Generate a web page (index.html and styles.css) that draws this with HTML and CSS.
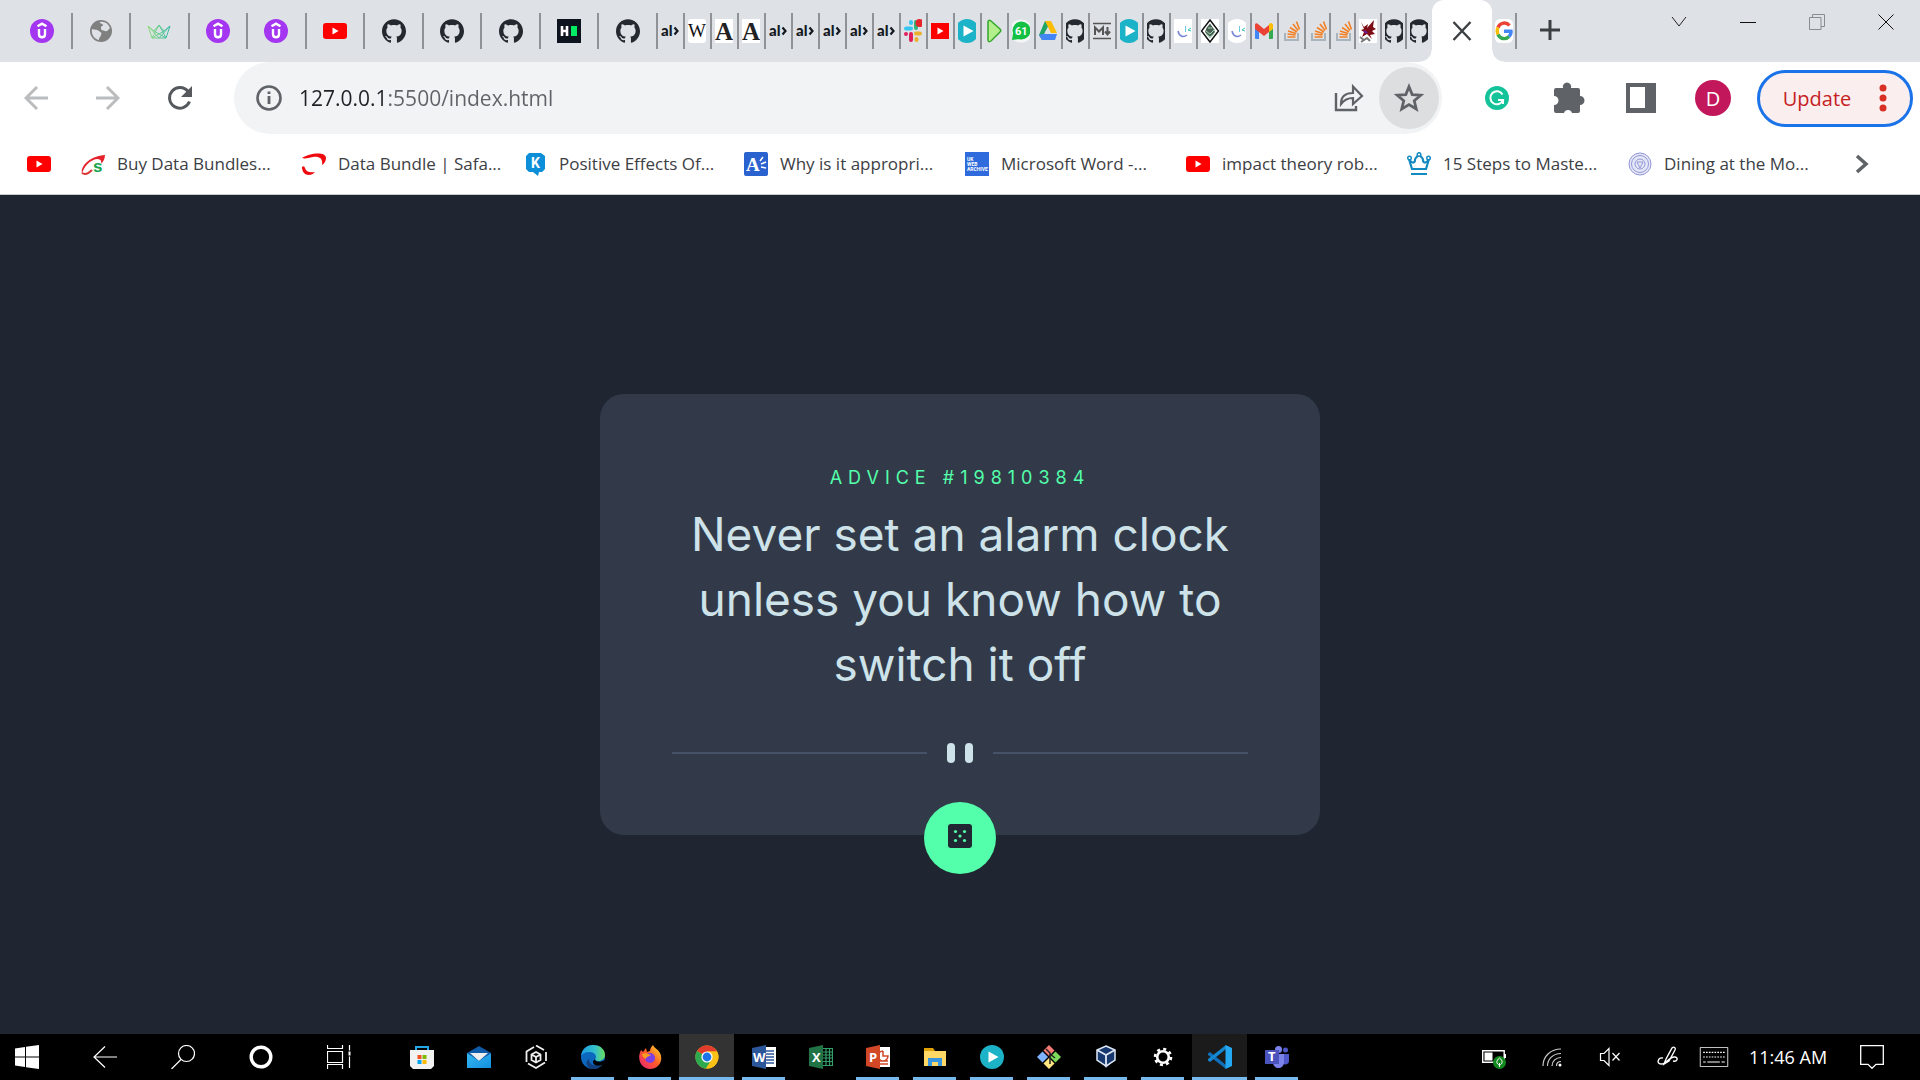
FILE: index.html
```html
<!DOCTYPE html>
<html lang="en">
<head>
<meta charset="utf-8">
<meta name="viewport" content="width=device-width, initial-scale=1">
<title>Advice Generator</title>
<link rel="stylesheet" href="styles.css">
</head>
<body>
<svg class="sprite" aria-hidden="true">
  <defs>
    <linearGradient id="edge-a" x1="0" y1="0" x2="1" y2="0"><stop offset="0" stop-color="#1b9de2"/><stop offset=".6" stop-color="#35c1c9"/><stop offset="1" stop-color="#6bdd5a"/></linearGradient>
    <linearGradient id="fox" x1="0" y1="1" x2="1" y2="0"><stop offset="0" stop-color="#e5207a"/><stop offset=".5" stop-color="#ff5a2a"/><stop offset="1" stop-color="#ffe226"/></linearGradient>
    <linearGradient id="mail-a" x1="0" y1="0" x2="1" y2="1"><stop offset="0" stop-color="#35b8f1"/><stop offset="1" stop-color="#1490df"/></linearGradient>
    <linearGradient id="crown-a" x1="0" y1="0" x2="1" y2="0"><stop offset="0" stop-color="#8fdc7a"/><stop offset="1" stop-color="#35b9a5"/></linearGradient>
  </defs>
  <symbol id="udemy" viewBox="0 0 24 24"><circle cx="12" cy="12" r="12" fill="#a435f0"/><path d="M7.500 7.300L12 4.600l4.500 2.700M9 10v5.200c0 4 6 4 6 0V10" fill="none" stroke="#fff" stroke-width="2.400"/></symbol>
  <symbol id="globe" viewBox="0 0 24 24"><circle cx="12" cy="12" r="11" fill="#808080"/><path d="M3 10c2 1 5 0 7 2s3 1 2 4-2 2-2 5C5 20 2 15 3 10zM11 3c4-1 8 1 10 6-2 2-3 4-5 3s-4 0-4-3 2-1 2-3-4-1-3-3z" fill="#dee1e6"/></symbol>
  <symbol id="crown" viewBox="0 0 24 24"><path d="M1 7l6 5 5-6 5 6 6-5-4 12H5zM5 19l7-13 7 13M1 7l11 12L23 7M7 12l12 7M17 12L5 19" fill="none" stroke="url(#crown-a)"/></symbol>
  <symbol id="youtube" viewBox="0 0 24 24" preserveAspectRatio="xMidYMid slice"><rect y="4" width="24" height="16" rx="3" fill="#f00"/><path d="M9.500 8.500v7l6-3.500z" fill="#fff"/></symbol>
  <symbol id="github" viewBox="0 0 24 24" preserveAspectRatio="xMidYMid slice"><path fill="#24292f" d="M12 .297c-6.630 0-12 5.373-12 12 0 5.303 3.438 9.800 8.205 11.385.6.113.82-.258.82-.577 0-.285-.01-1.040-.015-2.040-3.338.724-4.042-1.610-4.042-1.610C4.422 18.070 3.633 17.700 3.633 17.700c-1.087-.744.084-.729.084-.729 1.205.084 1.838 1.236 1.838 1.236 1.070 1.835 2.809 1.305 3.495.998.108-.776.417-1.305.76-1.605-2.665-.3-5.466-1.332-5.466-5.930 0-1.310.465-2.380 1.235-3.220-.135-.303-.54-1.523.105-3.176 0 0 1.005-.322 3.300 1.230.96-.267 1.980-.399 3-.405 1.020.006 2.040.138 3 .405 2.280-1.552 3.285-1.230 3.285-1.230.645 1.653.24 2.873.12 3.176.765.84 1.230 1.910 1.230 3.220 0 4.610-2.805 5.625-5.475 5.920.42.36.81 1.096.81 2.220 0 1.606-.015 2.896-.015 3.286 0 .315.21.69.825.57C20.565 22.092 24 17.592 24 12.297c0-6.627-5.373-12-12-12"/></symbol>
  <symbol id="slack" viewBox="0 0 18 24"><g stroke-width="4" stroke-linecap="round"><path d="M7 9.500H2M7 3v1" stroke="#36c5f0"/><path d="M12 9V3" stroke="#2eb67d"/><path d="M7 15v6M2 15v0" stroke="#e01e5a"/><path d="M12 14.500h4M12.500 20v1" stroke="#ecb22e"/></g><circle cx="15.500" cy="4" r="4" fill="#e5252a"/></symbol>
  <symbol id="play" viewBox="0 0 24 24" preserveAspectRatio="xMidYMid slice"><circle cx="12" cy="12" r="12" fill="#1cb3c8"/><path d="M8.500 6.500v11l10-5.500z" fill="#fff"/></symbol>
  <symbol id="greenplay" viewBox="0 0 18 24"><path d="M3 3c0-2 1.500-2 3-1l9 8c1 1 1 2 0 3l-9 9c-1.500 1-3 1-3-1z" fill="#b4ef8d" stroke="#34a62b" stroke-width="1.500"/></symbol>
  <symbol id="drive" viewBox="0 0 18 24"><path d="M6 2h6l-6 11-3 8-3-5z" fill="#1fa463"/><path d="M6 2h6l6 12h-6z" fill="#fbbc04"/><path d="M4 15h14l-2 6H3l-3-5z" fill="#4285f4"/></symbol>
  <symbol id="markdown" viewBox="0 0 18 24"><path d="M0 4.500h18M0 19.500h18" stroke="#555" stroke-width="1.500"/><path d="M2 16V8.500l4 4 4-4V16M14.500 8v7M12 12.500l2.500 3 2.500-3" fill="none" stroke="#555" stroke-width="2"/></symbol>
  <symbol id="smile" viewBox="0 0 18 24"><path d="M4 12c1 5 5 7 9 4" fill="none" stroke="#7887d6" stroke-width="1.500"/><path d="M11.500 7v6" stroke="#6cc8de"/><path d="M17 9l-3 2 3 1" fill="none" stroke="#3fc3b6"/></symbol>
  <symbol id="hood" viewBox="0 0 18 24"><path d="M0 0h18v24H0z" fill="#fff"/><path d="M9 1l8.500 11L9 23 .5 12z" fill="#fff" stroke="#111" stroke-width="1.500"/><path d="M9 4.500l3.500 5L14 13l-5 6-5-6 1.500-4z" fill="#4a5f53"/><path d="M5 12l4 3 5-5M5 15l4 3 4-3M7 9h4" stroke="#9fd8b4" fill="none"/></symbol>
  <symbol id="gmail" viewBox="0 0 18 24"><path d="M0 6h4v14H1c-1 0-1-1-1-1z" fill="#4285f4"/><path d="M14 6h4v13s0 1-1 1h-3z" fill="#34a853"/><path d="M14 5l2-1c1 0 2 1 2 2v4l-4 3z" fill="#fbbc04"/><path d="M0 6c0-2 2-2 3-1l6 5 5-4v7l-5 4-9-7z" fill="#ea4335"/></symbol>
  <symbol id="so" viewBox="0 0 18 24"><path d="M3 14v7h13v-7" fill="none" stroke="#aab4bc" stroke-width="2"/><path d="M5.500 18h8M5.500 15l8 1M6 12l8 2.500M8 8.500l7 4.500M11 5l5 6.500M14.500 2.500l3 8" stroke="#f48024" stroke-width="1.600"/></symbol>
  <symbol id="dragon" viewBox="0 0 18 24"><path d="M0 0h18v24H0z" fill="#fff"/><path d="M2 3l3 5 4-3-1 4 7-8-1 7 3 2-4 2 3 3-5 1 2 4-5-5-5 3 2-5-3-2 3-1z" fill="#7d0d16"/><path d="M1 18l4 3 3-2 3 3M2 23l3-2" stroke="#777" fill="none" stroke-width="2"/><path d="M5 12l3 2" stroke="#6b1fa5" stroke-width="2"/></symbol>
  <symbol id="google" viewBox="0 0 18 24"><rect width="18" height="24" rx="5" fill="#fff"/><g fill="none" stroke-width="3.400"><path d="M14.500 6.500A7 7.800 0 0 0 3 8.500" stroke="#ea4335"/><path d="M3 8.500a7 7.800 0 0 0 0 7" stroke="#fbbc05"/><path d="M3 15.500A7 7.800 0 0 0 14 17.500" stroke="#34a853"/><path d="M14 17.500c1.500-1.500 2.300-3.500 2-5.300H9" stroke="#4285f4"/></g></symbol>
  <symbol id="bluecrown" viewBox="0 0 24 24"><path d="M5 17h14l3-10c-2 4-6 5-6 1 0-3-2-2-4-6-2 4-4 3-4 6 0 4-4 3-6-1zM4 22h16" fill="none" stroke="#128ac0" stroke-width="2.200"/><g fill="#fff" stroke="#128ac0" stroke-width="1.400"><circle cx="12" cy="2.500" r="1.800"/><circle cx="2.500" cy="6" r="1.800"/><circle cx="21.500" cy="6" r="1.800"/></g></symbol>
  <symbol id="seal" viewBox="0 0 24 24"><g fill="#e7e8f7" stroke="#9195d5"><circle cx="12" cy="12" r="11"/><circle cx="12" cy="12" r="8.500"/><circle cx="12" cy="12" r="5"/><path d="M9 10h6l-3 6z"/></g></symbol>
</svg>

<header class="browser">
  <nav class="tabstrip" aria-label="Open tabs">
    <div class="tabs tabs-wide">
      <button class="tab"><svg class="ico"><use href="#udemy"/></svg></button>
      <button class="tab"><svg class="ico"><use href="#globe"/></svg></button>
      <button class="tab"><svg class="ico"><use href="#crown"/></svg></button>
      <button class="tab"><svg class="ico"><use href="#udemy"/></svg></button>
      <button class="tab"><svg class="ico"><use href="#udemy"/></svg></button>
      <button class="tab"><svg class="ico"><use href="#youtube"/></svg></button>
      <button class="tab"><svg class="ico"><use href="#github"/></svg></button>
      <button class="tab"><svg class="ico"><use href="#github"/></svg></button>
      <button class="tab"><svg class="ico"><use href="#github"/></svg></button>
      <button class="tab"><svg class="ico" viewBox="0 0 24 24"><path d="M0 0h24v24H0z" fill="#0e141e"/><path d="M5 7v10M10 7v10M5 12h5" stroke="#fff" stroke-width="2.600"/><path d="M14 7h6v10h-6z" fill="#00ea64"/></svg></button>
      <button class="tab"><svg class="ico"><use href="#github"/></svg></button>
    </div>
    <div class="tabs tabs-narrow">
      <button class="tab"><svg class="ico" viewBox="0 0 18 24"><text x="0" y="17" class="g-alx">al</text><path d="M13.500 8.500l3 3.500-3 3.500" fill="none" stroke="#14191f" stroke-width="2.200"/></svg></button>
      <button class="tab"><svg class="ico" viewBox="0 0 18 24"><rect width="18" height="24" rx="3" fill="#fff"/><text x="0" y="18" class="g-wiki">W</text></svg></button>
      <button class="tab"><svg class="ico" viewBox="0 0 18 24"><path d="M0 0h18v24H0z" fill="#fff"/><text x="0" y="21" class="g-serif">A</text></svg></button>
      <button class="tab"><svg class="ico" viewBox="0 0 18 24"><path d="M0 0h18v24H0z" fill="#fff"/><text x="0" y="21" class="g-serif">A</text></svg></button>
      <button class="tab"><svg class="ico" viewBox="0 0 18 24"><text x="0" y="17" class="g-alx">al</text><path d="M13.500 8.500l3 3.500-3 3.500" fill="none" stroke="#14191f" stroke-width="2.200"/></svg></button>
      <button class="tab"><svg class="ico" viewBox="0 0 18 24"><text x="0" y="17" class="g-alx">al</text><path d="M13.500 8.500l3 3.500-3 3.500" fill="none" stroke="#14191f" stroke-width="2.200"/></svg></button>
      <button class="tab"><svg class="ico" viewBox="0 0 18 24"><text x="0" y="17" class="g-alx">al</text><path d="M13.500 8.500l3 3.500-3 3.500" fill="none" stroke="#14191f" stroke-width="2.200"/></svg></button>
      <button class="tab"><svg class="ico" viewBox="0 0 18 24"><text x="0" y="17" class="g-alx">al</text><path d="M13.500 8.500l3 3.500-3 3.500" fill="none" stroke="#14191f" stroke-width="2.200"/></svg></button>
      <button class="tab"><svg class="ico" viewBox="0 0 18 24"><text x="0" y="17" class="g-alx">al</text><path d="M13.500 8.500l3 3.500-3 3.500" fill="none" stroke="#14191f" stroke-width="2.200"/></svg></button>
      <button class="tab"><svg class="ico"><use href="#slack"/></svg></button>
      <button class="tab"><svg class="ico"><use href="#youtube"/></svg></button>
      <button class="tab"><svg class="ico"><use href="#play"/></svg></button>
      <button class="tab"><svg class="ico"><use href="#greenplay"/></svg></button>
      <button class="tab"><svg class="ico" viewBox="0 0 18 24"><circle cx="9" cy="12" r="11.500" fill="#f3f6f4"/><circle cx="9.500" cy="11.500" r="9" fill="#12c143"/><path d="M0 21l1-7 6 6z" fill="#12c143"/><text x="3" y="16" class="g-badge">61</text></svg></button>
      <button class="tab"><svg class="ico"><use href="#drive"/></svg></button>
      <button class="tab"><svg class="ico"><use href="#github"/></svg></button>
      <button class="tab"><svg class="ico"><use href="#markdown"/></svg></button>
      <button class="tab"><svg class="ico"><use href="#play"/></svg></button>
      <button class="tab"><svg class="ico"><use href="#github"/></svg></button>
      <button class="tab"><svg class="ico" viewBox="0 0 18 24"><path d="M0 0h18v24H0z" fill="#fff"/><use href="#smile" width="18" height="24"/></svg></button>
      <button class="tab"><svg class="ico"><use href="#hood"/></svg></button>
      <button class="tab"><svg class="ico" viewBox="0 0 18 24"><circle cx="9" cy="12" r="12" fill="#fff"/><use href="#smile" width="18" height="24"/></svg></button>
      <button class="tab"><svg class="ico"><use href="#gmail"/></svg></button>
      <button class="tab"><svg class="ico"><use href="#so"/></svg></button>
    </div>
    <div class="tabs tabs-tight">
      <button class="tab"><svg class="ico"><use href="#so"/></svg></button>
      <button class="tab"><svg class="ico"><use href="#so"/></svg></button>
      <button class="tab"><svg class="ico"><use href="#dragon"/></svg></button>
      <button class="tab"><svg class="ico"><use href="#github"/></svg></button>
      <button class="tab"><svg class="ico"><use href="#github"/></svg></button>
    </div>
    <button class="tab-active" aria-label="Close tab"><svg class="ico" viewBox="0 0 24 24"><path d="M3.500 3l17 18M20.500 3l-17 18" stroke="#3c4043" stroke-width="2.400"/></svg></button>
    <button class="tab tab-last"><svg class="ico"><use href="#google"/></svg></button>
    <button class="newtab" aria-label="New tab"><svg class="ico" viewBox="0 0 24 24"><path d="M12 1v20M2 11h20" stroke="#3c4043" stroke-width="3"/></svg></button>
    <div class="winctl">
      <button aria-label="Search tabs"><svg viewBox="0 0 16 16"><path d="M1 3l7 9 7-9" fill="none" stroke="#222"/></svg></button>
      <button aria-label="Minimize"><svg viewBox="0 0 16 16"><path d="M0 8.500h16" stroke="#111"/></svg></button>
      <button aria-label="Restore"><svg viewBox="0 0 16 16"><path d="M.5 3.500h11.500v12H.5zM3.500 3V.5h12V12.500H12" fill="none" stroke="#888c90"/></svg></button>
      <button aria-label="Close"><svg viewBox="0 0 16 16"><path d="M.5.5l15 15M15.500.5l-15 15" stroke="#111"/></svg></button>
    </div>
  </nav>

  <div class="toolbar">
    <div class="navbtns">
      <button aria-label="Back"><svg class="ico" viewBox="0 0 24 24"><path d="M24 12H2M13 1L2 12l11 11" fill="none" stroke="#babcbe" stroke-width="3"/></svg></button>
      <button aria-label="Forward"><svg class="ico" viewBox="0 0 24 24"><path d="M0 12h22M11 1l11 11-11 11" fill="none" stroke="#babcbe" stroke-width="3"/></svg></button>
      <button aria-label="Reload"><svg class="ico" viewBox="0 0 24 24"><path d="M21.500 15.500A10.300 10.300 0 1 1 20 5.500" fill="none" stroke="#55585c" stroke-width="3"/><path d="M24 0v11H13z" fill="#55585c"/></svg></button>
    </div>
    <div class="omnibox">
      <svg class="info" viewBox="0 0 26 26"><circle cx="13" cy="13" r="11.500" fill="none" stroke="#5f6368" stroke-width="2.600"/><path d="M13 11v8M13 6.500V9" stroke="#5f6368" stroke-width="2.800"/></svg>
      <input class="url" type="text" aria-label="Address" value="127.0.0.1:5500/index.html">
      <button class="share" aria-label="Share"><svg viewBox="0 0 30 30"><path d="M2 10v17h20v-4" fill="none" stroke="#5f6368" stroke-width="2.400"/><path d="M7 21c0-8 5-11 12-11V3.500L28 13l-9 8v-6c-6 0-9 2-12 6z" fill="none" stroke="#5f6368" stroke-width="2.200"/></svg></button>
      <button class="star" aria-label="Bookmark this page"><svg viewBox="0 0 28 28"><path d="M14 3.500l3 7.300 7.900.6-6 5.200 1.900 7.700L14 20.200l-6.800 4.100 1.900-7.700-6-5.200 7.900-.6z" fill="none" stroke="#5f6368" stroke-width="2.600"/></svg></button>
    </div>
    <div class="exts">
      <button aria-label="Grammarly"><svg viewBox="0 0 24 24" class="ico"><circle cx="12" cy="12" r="12" fill="#15c39a"/><path d="M17.500 8.500A6.500 6.500 0 1 0 18 14h-5M18 18v-4" fill="none" stroke="#fff" stroke-width="2"/></svg></button>
      <button aria-label="Extensions"><svg class="ext-ico" viewBox="0 0 32 32"><path d="M3 6h7a4.200 4.200 0 1 1 8 0h7a2 2 0 0 1 2 2v6a4.500 4.500 0 1 1 0 9v6a2 2 0 0 1-2 2h-6a4.200 4.200 0 0 0-8 0H3a2 2 0 0 1-2-2v-6a4.500 4.500 0 0 0 0-9V8a2 2 0 0 1 2-2z" fill="#5f6368"/></svg></button>
      <button aria-label="Side panel"><svg class="ext-ico" viewBox="0 0 32 32"><path d="M1 1h30v30H1z" fill="#5f6368"/><path d="M5 5h15v21H5z" fill="#fff"/></svg></button>
      <button class="avatar" aria-label="Profile">D</button>
    </div>
    <button class="update">Update<svg viewBox="0 0 8 28"><g fill="#d93025"><circle cx="4" cy="4" r="3.500"/><circle cx="4" cy="14" r="3.500"/><circle cx="4" cy="24" r="3.500"/></g></svg></button>
  </div>

  <nav class="bookmarks" aria-label="Bookmarks">
    <a href="#" class="bm-first" aria-label="YouTube"><svg class="ico"><use href="#youtube"/></svg></a>
    <a href="#"><svg class="ico" viewBox="0 0 24 24"><path d="M1 22C-1 14 9 4 24 3c0 4-2 7-4 9 1-4-1-5-4-5C9 8 3 14 1 22z" fill="#e5222b"/><path d="M1 21c3 2 7 0 10-3" stroke="#d33" stroke-width="2" fill="none"/><text x="12" y="20" class="g-saf">s</text></svg>Buy Data Bundles...</a>
    <a href="#"><svg class="ico" viewBox="0 0 24 24"><path d="M0 6C7 1 24-1 24 6c0 3-2 6-4 7 1-6-2-9-9-8-5 1-8 2-11 1zM0 15c2-1 2-1 3 1 1 4 5 5 10 4-4 5-13 4-13-5z" fill="#f0090d"/></svg>Data Bundle | Safa...</a>
    <a href="#"><svg class="ico" viewBox="0 0 24 24"><path d="M6 1h12l4 3v13l-3 3h-3l-1 4-5-4H6l-3-3V4z" fill="#0d8ed8"/><text x="8" y="16" class="g-k">K</text></svg>Positive Effects Of...</a>
    <a href="#"><svg class="ico" viewBox="0 0 24 24"><rect width="24" height="24" rx="2" fill="#2a62d0"/><text x="2" y="19" class="g-as">A</text><path d="M16 9l3-4M17 12l5-2M17 15l5 1" stroke="#fff" stroke-width="1.500"/></svg>Why is it appropri...</a>
    <a href="#"><svg class="ico" viewBox="0 0 24 24"><path d="M0 0h24v24H0z" fill="#2f6bdc"/><text x="2" y="9" class="g-uk">UK</text><text x="2" y="14" class="g-uk">WEB</text><text x="2" y="19" class="g-uk">ARCHIVE</text></svg>Microsoft Word -...</a>
    <a href="#"><svg class="ico"><use href="#youtube"/></svg>impact theory rob...</a>
    <a href="#"><svg class="ico"><use href="#bluecrown"/></svg>15 Steps to Maste...</a>
    <a href="#"><svg class="ico"><use href="#seal"/></svg>Dining at the Mo...</a>
    <button class="more" aria-label="More bookmarks"><svg viewBox="0 0 14 20"><path d="M2 2l9 8-9 8" fill="none" stroke="#5f6368" stroke-width="3.500"/></svg></button>
  </nav>
</header>

<main class="page">
  <article class="card">
    <h1 class="advice-id">ADVICE #19810384</h1>
    <p class="advice">Never set an alarm clock unless you know how to switch it off</p>
    <div class="divider"><span class="rule"></span><span class="bar"></span><span class="bar"></span><span class="rule"></span></div>
    <button class="dice" aria-label="New advice"><svg class="ico" viewBox="0 0 24 24"><rect width="24" height="24" rx="3" fill="#202733"/><g fill="#53ffaa"><circle cx="7.500" cy="7.500" r="1.600"/><circle cx="16.500" cy="7.500" r="1.600"/><circle cx="12" cy="12" r="1.600"/><circle cx="7.500" cy="16.500" r="1.600"/><circle cx="16.500" cy="16.500" r="1.600"/></g></svg></button>
  </article>
</main>

<footer class="taskbar">
  <div class="system">
    <button aria-label="Start"><svg class="ico" viewBox="0 0 24 24"><path d="M0 3.500l10-1.500v9.500H0zM11 1.800L24 0v11.500H11zM0 12.500h10V22L0 20.500zM11 12.500h13V24l-13-1.800z" fill="#fff"/></svg></button>
    <button aria-label="Back"><svg class="ico" viewBox="0 0 24 24"><path d="M24 12H1M12 1.500L1 12l11 10.500" fill="none" stroke="#fff" stroke-width="1.200"/></svg></button>
    <button aria-label="Search"><svg class="ico" viewBox="0 0 24 24"><circle cx="15.500" cy="8.500" r="8" fill="none" stroke="#fff" stroke-width="1.200"/><path d="M10 14.500L.5 24" stroke="#fff" stroke-width="1.200"/></svg></button>
    <button aria-label="Cortana"><svg class="ico" viewBox="0 0 24 24"><circle cx="12" cy="12" r="9.800" fill="none" stroke="#fff" stroke-width="3.400"/></svg></button>
    <button aria-label="Task view"><svg class="ico" viewBox="0 0 24 24"><path d="M.5 0v3.500h15V0M.5 24v-4.500h15V24M.5 6.500h15v11H.5zM22.500 0v23" fill="none" stroke="#fff" stroke-width="1.200"/><path d="M21 6h3v5h-3z" fill="#fff" stroke="#000"/></svg></button>
  </div>
  <div class="apps">
    <button aria-label="Store"><svg class="ico" viewBox="0 0 24 24"><path d="M6 7V2h12v5" fill="none" stroke="#26a8e8" stroke-width="2"/><path d="M0 5h24v16l-3 3H3l-3-3z" fill="#f2f2f2"/><path d="M7.500 10h4v4h-4z" fill="#f25022"/><path d="M12.500 10h4v4h-4z" fill="#7fba00"/><path d="M7.500 15h4v4h-4z" fill="#00a4ef"/><path d="M12.500 15h4v4h-4z" fill="#ffb900"/></svg></button>
    <button aria-label="Mail"><svg class="ico" viewBox="0 0 24 24"><path d="M0 8l12-7 12 7-12 9z" fill="#0f5ba8"/><path d="M3 8h18l-9 8z" fill="#eee"/><path d="M0 8l12 8 12-8v15H0z" fill="url(#mail-a)"/></svg></button>
    <button aria-label="Hub"><svg class="ico" viewBox="0 0 24 24"><path d="M4 18.500l8 4.500 9-5.500M20 5l-8-4.500M2.500 17V6.500L10 2M22 7v9M7.500 9.500L12 7l4.500 2.500v5.500L12 17.500 7.500 15zM7.500 9.500L12 12l4.500-2.500M12 12v5.500" fill="none" stroke="#eee" stroke-width="1.800"/></svg></button>
    <button class="running" aria-label="Edge"><svg class="ico" viewBox="0 0 24 24"><circle cx="12" cy="12" r="12" fill="#0c68bf"/><path d="M0 11C1 3 7 0 12 0c8 0 12 5 12 10 0 4-4 6-7 6-2 0-3-1-3-2 1-1 1-1 1-2 0-4-4-5-7-5-4 0-7 2-8 4z" fill="url(#edge-a)"/><path d="M8 14c0 6 6 8 13 6-3 4-8 4-10 4-5-1-8-7-3-10z" fill="#123f7d"/><path d="M14 14c0 3 5 4 10 1v3l-3 2c-5 2-9 0-9-3 0-1 1-2 2-3z" fill="#000"/></svg></button>
    <button class="running" aria-label="Firefox"><svg class="ico" viewBox="0 0 24 24"><path d="M3 5l2 2 3-4 1 4 3-1C12 3 14 1 15 0c1 3 5 4 7 8 4 8-2 16-10 16S-2 15 3 5z" fill="url(#fox)"/><circle cx="12" cy="13" r="5" fill="#7b3fe4"/><path d="M4 9c4-2 6 0 9 1-2 2-5 1-5 4-2-1-4-3-4-5z" fill="#ff9d1e"/></svg></button>
    <button class="running focus" aria-label="Chrome"><svg class="ico" viewBox="0 0 24 24"><circle cx="12" cy="12" r="11.500" fill="#fbc116"/><path d="M12 12L2 6A11.500 11.500 0 0 1 22 6.500H12z" fill="#e33b2e"/><path d="M2 6a11.500 11.500 0 0 0 9 17.500L17 14l-5-2z" fill="#2da94f"/><path d="M12 6.500h10a11.500 11.500 0 0 1-11 17L17 14z" fill="#fbc116"/><circle cx="12" cy="12" r="5.600" fill="#fff"/><circle cx="12" cy="12" r="4.400" fill="#1a73e8"/></svg></button>
    <button class="running" aria-label="Word"><svg class="ico" viewBox="0 0 24 24"><path d="M12 2h12v20H12z" fill="#fff"/><path d="M14 6h8M14 9h8M14 12h8M14 15h8M14 18h8" stroke="#2b579a" stroke-width="1.400"/><path d="M0 3l14-3v24L0 21z" fill="#2b579a"/><text x="1" y="17" class="g-office">W</text></svg></button>
    <button aria-label="Excel"><svg class="ico" viewBox="0 0 24 24"><path d="M13 3.500h10.500v17H13zM17 3v18M20.500 3v18M13 7h11M13 10h11M13 13h11M13 16.500h11" fill="none" stroke="#33a06a" stroke-width="1.200"/><path d="M0 3l14-3v24L0 21z" fill="#217346"/><text x="3" y="17" class="g-office">X</text></svg></button>
    <button class="running" aria-label="PowerPoint"><svg class="ico" viewBox="0 0 24 24"><path d="M12 2h12v20H12z" fill="#fff"/><path d="M17 6v5h5a5 5 0 1 1-5-5M14 16h8M14 19h8" stroke="#d24726" stroke-width="1.500" fill="none"/><path d="M0 3l14-3v24L0 21z" fill="#d24726"/><text x="3" y="17" class="g-office">P</text></svg></button>
    <button class="running" aria-label="File Explorer"><svg class="ico" viewBox="0 0 24 24"><path d="M1 3h9l2 3v4H1z" fill="#e0a106"/><path d="M1 6h22v15H1z" fill="#ffd866"/><path d="M5 21v-8h14v8h-4v-4H9v4z" fill="#3b96e0"/></svg></button>
    <button class="running" aria-label="Media player"><svg class="ico"><use href="#play"/></svg></button>
    <button class="running" aria-label="Git"><svg class="ico" viewBox="0 0 24 24"><path d="M12 0l5.500 5.500L12 11 6.500 5.500z" fill="#f57c74"/><path d="M5.500 6.500L11 12l-5.500 5.500L0 12z" fill="#80b3ff"/><path d="M18.500 6.500L24 12l-5.500 5.500L13 12z" fill="#7ddb5c"/><path d="M12 13l5.500 5.500L12 24l-5.500-5.500z" fill="#ffe680"/><path d="M9 4l4 4v11M13 9l5 4" fill="none" stroke="#222" stroke-width="1.500"/></svg></button>
    <button class="running" aria-label="VirtualBox"><svg class="ico" viewBox="0 0 24 24"><path d="M8 18l4 5 5-5z" fill="#7d86b0"/><path d="M12 1l9 4v10l-9 6-9-6V5z" fill="#17386e" stroke="#dfe9f5" stroke-width="1.500"/><path d="M3 5l9 5 9-5M12 10v11" fill="none" stroke="#dfe9f5" stroke-width="1.800"/></svg></button>
    <button class="running" aria-label="Settings"><svg class="ico" viewBox="0 0 24 24"><circle cx="12" cy="12" r="5.800" fill="none" stroke="#fff" stroke-width="2.600"/><circle cx="12" cy="12" r="8" fill="none" stroke="#fff" stroke-width="2.600" stroke-dasharray="3 3.280"/></svg></button>
    <button class="running focus-dim" aria-label="Visual Studio Code"><svg class="ico" viewBox="0 0 24 24"><path d="M0 8.500L2 7l16 13v4L0 10z" fill="#0f6fb8"/><path d="M0 15.500L2 17 18 4V0L0 14z" fill="#1487d0"/><path d="M17.500 0L24 3v18l-6.500 3z" fill="#25a8f2"/></svg></button>
    <button class="running" aria-label="Teams"><svg class="ico" viewBox="0 0 24 24"><circle cx="13.500" cy="4.500" r="3.500" fill="#7b83eb"/><circle cx="20.500" cy="5" r="2.500" fill="#5059c9"/><path d="M17 9h7v7c0 3-3 4-6 3z" fill="#5059c9"/><path d="M8 9h11v8c0 8-11 8-11 0z" fill="#7b83eb"/><path d="M0 5h14v14H0z" fill="#4b53bc"/><text x="3" y="16" class="g-office">T</text></svg></button>
  </div>
  <div class="tray">
    <button aria-label="Battery"><svg class="ico" viewBox="0 0 24 24"><path d="M.7 5.700h21.500v11.600H.7z" fill="none" stroke="#fff" stroke-width="1.400"/><path d="M2.500 7.500h8v8h-8zM22 9h2v4h-2z" fill="#fff"/><circle cx="17.500" cy="17.500" r="6.500" fill="#128a1f"/><path d="M17.500 22v-4M17.500 13c4 3 3 6 0 7-3-1-4-4 0-7z" fill="none" stroke="#fff"/></svg></button>
    <button aria-label="Network"><svg class="ico" viewBox="0 0 24 24"><path d="M3 21C3 11 11 4 21 4M7.500 21C7.500 14 13 8.500 21 8.500M12 21c0-5 4-8.500 9-8.500M16.500 21c0-3 2-4.500 4.500-4.500" fill="none" stroke="#ccc" stroke-width="1.200"/><circle cx="20" cy="20" r="1.500" fill="#fff"/></svg></button>
    <button aria-label="Volume"><svg class="ico" viewBox="0 0 24 24"><path d="M2.500 8.500H6l5-5v17l-5-5H2.500zM14.500 8l7 7.500M21.500 8l-7 7.500" fill="none" stroke="#fff" stroke-width="1.200"/></svg></button>
    <button aria-label="Pen"><svg class="ico" viewBox="0 0 24 24"><path d="M8 19l2-5 6-11c2-2 4 0 3 2l-6 11zM7 13c-5-1-7 6-2 6 5 1 8-8 14-7 4 1 2 5-2 4" fill="none" stroke="#fff" stroke-width="1.400"/></svg></button>
    <button class="kbd" aria-label="Touch keyboard"><svg viewBox="0 0 34 24"><path d="M.5.500h33v23H.5z" fill="none" stroke="#fff"/><path d="M4 6.500h26M4 12h26" stroke="#fff" stroke-width="1.400" stroke-dasharray="2 1.400"/><path d="M4 18h3M9 18h15M26 18h4" stroke="#fff" stroke-width="1.400"/></svg></button>
    <time class="clock">11:46 AM</time>
    <button class="notify" aria-label="Notifications"><svg class="ico" viewBox="0 0 24 24"><path d="M.7.700h22.600v18.600H16l-4 4-4-4H.7z" fill="none" stroke="#fff" stroke-width="1.300"/></svg></button>
  </div>
</footer>
</body>
</html>
```
FILE: styles.css
```css
* { box-sizing: border-box; }

body {
  margin: 0;
  min-height: 100vh;
  display: flex;
  flex-direction: column;
  font-family: "Open Sans", "Noto Sans", sans-serif;
  background: #1f2632;
}

button {
  border: 0;
  padding: 0;
  background: none;
  font: inherit;
  display: flex;
  align-items: center;
  justify-content: center;
}

svg { display: block; flex: none; }
.sprite { width: 0; height: 0; position: absolute; }
.ico { width: 24px; height: 24px; }

/* Lettering inside favicons and app icons */
.g-alx { font: 900 15px Lato, sans-serif; fill: #14191f; }
.g-wiki { font: 19px "Liberation Serif", serif; fill: #111; }
.g-serif { font: bold 25px "Liberation Serif", serif; fill: #222; }
.g-badge { font: bold 11px Roboto, sans-serif; fill: #fff; }
.g-saf { font: bold 17px "Liberation Sans", sans-serif; fill: #17a44b; }
.g-k { font: bold 14px Roboto, sans-serif; fill: #fff; }
.g-as { font: bold 19px "Liberation Serif", serif; fill: #fff; }
.g-uk { font: bold 5px Roboto, sans-serif; fill: #fff; }
.g-office { font: bold 13px "Open Sans", sans-serif; fill: #fff; }

/* Tab strip */
.browser { background: #fff; border-bottom: 1px solid #c9cbd0; }
.tabstrip { display: flex; height: 62px; background: #dee1e6; }
.tabs { display: flex; align-items: center; }
.tab {
  flex: 1 1 0;
  min-width: 0;
  height: 36px;
  border-right: 2px solid #8f9296;
  overflow: hidden;
}
.tabs-wide { flex: 0 0 658px; padding-left: 14px; }
.tabs-narrow { flex: 0 0 648px; }
.tabs-tight { flex: 0 0 126px; }
.tabs-narrow .tab { justify-content: flex-start; padding-left: 3px; }
.tabs-tight .tab { justify-content: flex-start; padding-left: 3px; }
.tabs-tight .tab:last-child { border-right-color: transparent; }
.tabs-narrow .ico, .tabs-tight .ico, .tab-last .ico { width: 18px; }
.tab-active {
  position: relative;
  flex: 0 0 60px;
  background: #fff;
  border-radius: 12px 12px 0 0;
}
.tab-active::before, .tab-active::after {
  content: "";
  position: absolute;
  bottom: 0;
  width: 12px;
  height: 12px;
}
.tab-active::before { right: 100%; background: radial-gradient(circle at 0 0, transparent 11px, #fff 12px); }
.tab-active::after { left: 100%; background: radial-gradient(circle at 100% 0, transparent 11px, #fff 12px); }
.tab-last { flex: 0 0 25px; align-self: center; justify-content: flex-start; padding-left: 3px; }
.newtab { width: 66px; }
.winctl { margin-left: auto; display: flex; height: 50px; }
.winctl button { width: 69px; height: 43px; }
.winctl svg { width: 16px; height: 16px; }

/* Toolbar */
.toolbar { display: flex; align-items: center; height: 72px; padding-right: 7px; }
.navbtns { display: flex; flex: 0 0 234px; }
.navbtns button { width: 72px; }
.omnibox {
  flex: 1;
  display: flex;
  align-items: center;
  height: 72px;
  padding: 0 3px 0 22px;
  border-radius: 36px;
  background: #f1f3f4;
}
.info { width: 26px; height: 26px; }
.url {
  flex: 1;
  min-width: 0;
  margin-left: 17px;
  padding: 0;
  border: 0;
  outline: 0;
  font: 21px/32px "Open Sans", "Noto Sans", sans-serif;
  color: transparent;
  background: linear-gradient(90deg, #202124 87px, #5f6368 87px);
  background-clip: text;
  -webkit-background-clip: text;
}
.share { width: 60px; }
.share svg { width: 30px; height: 30px; }
.star { width: 60px; height: 62px; border-radius: 50%; background: #dcdee0; }
.star svg { width: 30px; height: 30px; }
.exts { display: flex; align-items: center; padding: 0 8px 0 19px; }
.exts button { width: 72px; }
.ext-ico { width: 32px; height: 32px; }
.exts .avatar {
  width: 36px;
  height: 36px;
  margin: 0 18px;
  border-radius: 50%;
  background: #c2185b;
  color: #fff;
  font-size: 20px;
}
.update {
  width: 156px;
  height: 57px;
  gap: 28px;
  border: 3px solid #1a73e8;
  border-radius: 29px;
  background: #fbeeee;
  color: #c5221f;
  font-size: 20px;
}
.update svg { width: 8px; height: 28px; }

/* Bookmarks bar */
.bookmarks {
  display: flex;
  align-items: center;
  height: 60px;
  padding-left: 27px;
}
.bookmarks a {
  flex: 0 1 221px;
  display: flex;
  align-items: center;
  gap: 12px;
  color: #3c4043;
  font-size: 17px;
  line-height: 28px;
  text-decoration: none;
  white-space: nowrap;
}
.bookmarks .bm-first { flex-basis: 54px; }
.more { margin-left: 6px; }
.more svg { width: 14px; height: 20px; }

/* Advice page */
.page { flex: 1; display: flex; align-items: center; justify-content: center; padding: 24px; }
.card {
  position: relative;
  width: 100%;
  max-width: 720px;
  padding: 72px;
  border-radius: 24px;
  background: #323a49;
  text-align: center;
}
.advice-id {
  margin: 0 0 12px;
  font: 400 18px/24px Inter, sans-serif;
  letter-spacing: 6px;
  color: #53ffaa;
}
.advice {
  margin: 0 0 46px;
  font: 400 46px/65px Inter, sans-serif;
  color: #cee3e9;
}
.divider { display: flex; align-items: center; gap: 10px; height: 20px; }
.rule { flex: 1; height: 2px; background: #465267; }
.rule:first-child { margin-right: 10px; }
.rule:last-child { margin-left: 10px; }
.bar { width: 8px; height: 20px; border-radius: 4px; background: #cee3e9; }
.dice {
  position: absolute;
  left: calc(50% - 36px);
  bottom: -39px;
  width: 72px;
  height: 72px;
  padding-bottom: 4px;
  border-radius: 50%;
  background: #53ffaa;
}

/* Taskbar */
.taskbar { display: flex; height: 46px; background: #000; color: #fff; }
.system { display: flex; gap: 54px; padding: 0 43px 0 15px; }
.apps { display: flex; gap: 2px; }
.apps button { width: 55px; position: relative; }
.running::after {
  content: "";
  position: absolute;
  left: 6px;
  right: 6px;
  bottom: 0;
  height: 3px;
  background: #76b9ed;
}
.focus { background: #333; }
.focus-dim { background: #1b1b1b; }
.focus::after, .focus-dim::after { left: 0; right: 0; }
.tray { display: flex; align-items: center; margin-left: auto; padding-right: 36px; }
.tray button { width: 58px; }
.tray .kbd { width: 34px; }
.kbd svg { width: 34px; height: 20px; }
.clock { width: 78px; margin: 0 33px 0 18px; font-size: 18px; line-height: 24px; white-space: nowrap; }
.tray .notify { width: 24px; }
```
